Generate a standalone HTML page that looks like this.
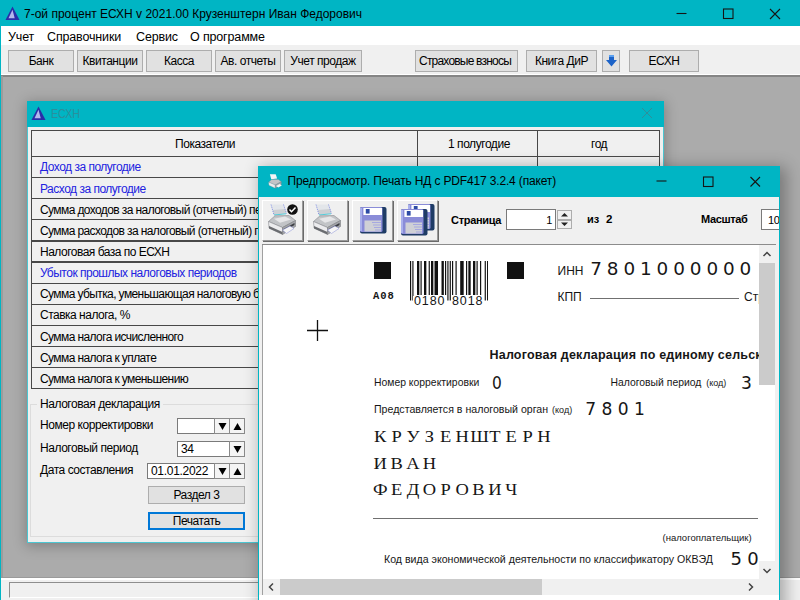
<!DOCTYPE html>
<html lang="ru">
<head>
<meta charset="utf-8">
<title>7-ой процент ЕСХН</title>
<style>
*{box-sizing:border-box;margin:0;padding:0}
html,body{width:800px;height:600px;overflow:hidden;background:#ababab;font-family:"Liberation Sans",sans-serif;font-size:12px;color:#000}
.abs{position:absolute}
#main{position:relative;width:800px;height:600px;overflow:hidden;background:#ababab}
.teal{background:#00b5c4}
.w{white-space:nowrap}
.ui{font-size:12px;letter-spacing:-0.45px}
.btn{position:absolute;border:1px solid #adadad;background:#e1e1e1;text-align:center;font-size:12px;letter-spacing:-0.45px;white-space:nowrap}
.tb{top:50px;height:21.500px;line-height:21px}
.hl{left:31px;width:629px;height:1.300px;background:#484848}
.vl{top:130px;width:1.300px;height:259px;background:#484848}
.rt{left:40px;font-size:12px;letter-spacing:-0.5px;line-height:14px}
.blue{color:#2222e0}
.inp{position:absolute;background:#fff;border:1px solid #7a7a7a;font-size:12px;letter-spacing:-0.3px;line-height:14px;padding:0 0 0 3px}
.sp{position:absolute;width:16px;height:16px;border:1px solid #8a8a8a;background:#f4f4f4}
.sp svg{position:absolute;left:3px;top:3px}
.pb{position:absolute;top:200px;width:41px;height:41px;border:1px solid;border-color:#fff #9a9a9a #9a9a9a #fff;background:#f0f0f0;box-shadow:1px 1px 0 #6a6a6a}
.doc{color:#161616}
.mono{font-family:"Liberation Mono","DejaVu Sans Mono",monospace}
.dj{font-family:"DejaVu Sans","Liberation Sans",sans-serif}
.b{font-weight:bold}
.nm{font-family:"Liberation Serif",serif;font-size:16.500px;transform:scaleX(1.12);transform-origin:0 0}
.nm i{font-style:normal;display:inline-block;width:14.640px;text-align:center}
</style>
</head>
<body>
<div id="main">
<!-- ================= main window ================= -->
<div class="abs teal" style="left:0;top:0;width:800px;height:600px"></div>
<div class="abs" style="left:1px;top:26px;width:799px;height:22px;background:#fff"></div>
<div class="abs" style="left:1px;top:45.300px;width:799px;height:30px;background:#f0f0f0"></div>
<div class="abs" style="left:1px;top:73.500px;width:799px;height:2px;background:#fff"></div>
<div class="abs" style="left:1px;top:75px;width:799px;height:505px;background:#ababab"></div>
<div class="abs" style="left:1px;top:75px;width:799px;height:1.700px;background:#858585"></div>
<div class="abs" style="left:1px;top:76px;width:1.500px;height:504px;background:#9c9c9c"></div>
<div class="abs" style="left:1px;top:577px;width:799px;height:1px;background:#9a9a9a"></div>
<div class="abs" style="left:1px;top:578px;width:799px;height:22px;background:#fff"></div>
<div class="abs" style="left:1px;top:579.500px;width:799px;height:21px;background:#f0f0f0"></div>
<div class="abs" style="left:9px;top:582px;width:252px;height:15.500px;border:1px solid #8e8e8e;border-right:none;border-bottom:1.500px solid #fff"></div>

<svg class="abs" style="left:4.500px;top:5.500px" width="15" height="14.500" viewBox="0 0 17 17" preserveAspectRatio="none"><polygon points="8.500,0.500 16.500,16.500 0.500,16.500" fill="#2a2ea8"/><polygon points="8.500,4.500 11,14.500 4,14.500" fill="#b4b7ec"/></svg>
<span class="abs w" style="left:24px;top:7px;font-size:12px;letter-spacing:0">7-ой процент ЕСХН v 2021.00 Крузенштерн Иван Федорович</span>
<svg class="abs" style="left:660px;top:0" width="140" height="26" viewBox="0 0 140 26" fill="none" stroke="#151515" stroke-width="1.100"><path d="M16.500 13.500h10"/><rect x="63.500" y="9" width="9.500" height="9.500"/><path d="M110 9l10 10M120 9l-10 10"/></svg>

<span class="abs w" style="left:8px;top:29.500px;font-size:12.500px;letter-spacing:-0.15px">Учет</span>
<span class="abs w" style="left:47px;top:29.500px;font-size:12.500px;letter-spacing:-0.15px">Справочники</span>
<span class="abs w" style="left:136px;top:29.500px;font-size:12.500px;letter-spacing:-0.15px">Сервис</span>
<span class="abs w" style="left:190px;top:29.500px;font-size:12.500px;letter-spacing:-0.15px">О программе</span>

<div class="btn tb" style="left:8px;width:66px">Банк</div>
<div class="btn tb" style="left:77px;width:66px">Квитанции</div>
<div class="btn tb" style="left:146px;width:66px">Касса</div>
<div class="btn tb" style="left:215px;width:66px">Ав. отчеты</div>
<div class="btn tb" style="left:284px;width:78px">Учет продаж</div>
<div class="btn tb" style="left:415px;width:103px;letter-spacing:-0.8px;padding-right:3px">Страховые взносы</div>
<div class="btn tb" style="left:526px;width:71px">Книга ДиР</div>
<div class="btn tb" style="left:602px;width:18px"><svg width="11" height="12" viewBox="0 0 11 12" style="position:absolute;left:3px;top:4px"><path d="M3 0h5v5h3l-5.500 6.500L0 5h3z" fill="#1c63c8"/><path d="M3 0h5v2h-5z" fill="#5aa0f0"/></svg></div>
<div class="btn tb" style="left:629px;width:70px">ЕСХН</div>

<!-- ================= ECXH child window ================= -->
<div class="abs" style="left:27px;top:101px;width:637px;height:442px;background:#f0f0f0;border:1px solid #4cc6d2;box-shadow:0 2px 12px 1px rgba(0,0,0,.25)"></div>
<div class="abs teal" style="left:27px;top:101px;width:637px;height:26px"></div>
<svg class="abs" style="left:31px;top:106px" width="15" height="14.500" viewBox="0 0 17 17" preserveAspectRatio="none"><polygon points="8.500,0.500 16.500,16.500 0.500,16.500" fill="#2a2ea8"/><polygon points="8.500,4.500 11,14.500 4,14.500" fill="#b4b7ec"/></svg>
<span class="abs w" style="left:51px;top:107px;font-size:12px;color:#2a8f9c;transform:scaleX(0.89);transform-origin:0 0">ЕСХН</span>
<svg class="abs" style="left:640px;top:106px" width="14" height="14" viewBox="0 0 14 14" stroke="#2f8e9a" stroke-width="1" fill="none"><path d="M2 2l10 10M12 2L2 12"/></svg>

<div class="abs hl" style="top:130px"></div>
<div class="abs hl" style="top:388px"></div>
<div class="abs vl" style="left:30.500px"></div>
<div class="abs vl" style="left:417px"></div>
<div class="abs vl" style="left:537px"></div>
<div class="abs vl" style="left:659px"></div>
<span class="abs w ui" style="left:175px;top:137px;line-height:14px">Показатели</span>
<span class="abs w ui" style="left:448px;top:137px;line-height:14px">1 полугодие</span>
<span class="abs w ui" style="left:591px;top:137px;line-height:14px">год</span>
<div class="abs hl" style="top:155.7px"></div><span class="abs w rt blue" style="top:160.3px">Доход за полугодие</span>
<div class="abs hl" style="top:176.8px"></div><span class="abs w rt blue" style="top:181.5px">Расход за полугодие</span>
<div class="abs hl" style="top:198.0px"></div><span class="abs w rt" style="top:202.6px;letter-spacing:-0.6px">Сумма доходов за налоговый (отчетный) период</span>
<div class="abs hl" style="top:219.1px"></div><span class="abs w rt" style="top:223.8px;letter-spacing:-0.6px">Сумма расходов за налоговый (отчетный) период</span>
<div class="abs hl" style="top:240.3px"></div><span class="abs w rt" style="top:244.9px">Налоговая база по ЕСХН</span>
<div class="abs hl" style="top:261.4px"></div><span class="abs w rt blue" style="top:266.1px">Убыток прошлых налоговых периодов</span>
<div class="abs hl" style="top:282.6px"></div><span class="abs w rt" style="top:287.2px;letter-spacing:-0.6px">Сумма убытка, уменьшающая налоговую базу</span>
<div class="abs hl" style="top:303.7px"></div><span class="abs w rt" style="top:308.3px">Ставка налога, %</span>
<div class="abs hl" style="top:324.9px"></div><span class="abs w rt" style="top:329.5px;letter-spacing:-0.6px">Сумма налога исчисленного</span>
<div class="abs hl" style="top:346.1px"></div><span class="abs w rt" style="top:350.7px;letter-spacing:-0.6px">Сумма налога к уплате</span>
<div class="abs hl" style="top:367.2px"></div><span class="abs w rt" style="top:371.8px;letter-spacing:-0.6px">Сумма налога к уменьшению</span>

<div class="abs" style="left:30px;top:404px;width:232px;height:133px;border:1px solid #dcdcdc"></div>
<span class="abs w ui" style="left:37px;top:397px;background:#f0f0f0;padding:0 3px;line-height:14px">Налоговая декларация</span>
<span class="abs w ui" style="left:40px;top:418px;line-height:14px">Номер корректировки</span>
<span class="abs w ui" style="left:40px;top:441px;line-height:14px">Налоговый период</span>
<span class="abs w ui" style="left:40px;top:463px;line-height:14px">Дата составления</span>
<div class="inp" style="left:177px;top:418px;width:38px;height:16px"></div>
<div class="sp" style="left:214px;top:418px"><svg width="9" height="9" viewBox="0 0 9 9"><path d="M0.500 1h8l-4 7z"/></svg></div>
<div class="sp" style="left:229px;top:418px"><svg width="9" height="9" viewBox="0 0 9 9"><path d="M0.500 8h8l-4-7z"/></svg></div>
<div class="inp" style="left:177px;top:441px;width:53px;height:16px">34</div>
<div class="sp" style="left:229px;top:441px"><svg width="9" height="9" viewBox="0 0 9 9"><path d="M0.500 1h8l-4 7z"/></svg></div>
<div class="inp" style="left:147px;top:463px;width:68px;height:16px">01.01.2022</div>
<div class="sp" style="left:214px;top:463px"><svg width="9" height="9" viewBox="0 0 9 9"><path d="M0.500 1h8l-4 7z"/></svg></div>
<div class="sp" style="left:229px;top:463px"><svg width="9" height="9" viewBox="0 0 9 9"><path d="M0.500 8h8l-4-7z"/></svg></div>
<div class="btn" style="left:148px;top:486px;width:97px;height:18px;line-height:16px">Раздел 3</div>
<div class="btn" style="left:148px;top:512px;width:97px;height:18px;line-height:14px;border:2px solid #0078d7">Печатать</div>

<!-- ================= Preview window ================= -->
<div class="abs" style="left:257.500px;top:166px;width:522.500px;height:450px;background:#f0f0f0;border:1.5px solid #00b5c4;box-shadow:4px 3px 15px 2px rgba(0,0,0,.3)"></div>
<div class="abs teal" style="left:257.500px;top:166px;width:522.500px;height:30.500px"></div>
<span class="abs w" style="left:287.5px;top:174px;font-size:12px;letter-spacing:-0.16px">Предпросмотр. Печать НД с PDF417 3.2.4 (пакет)</span>
<svg class="abs" style="left:640px;top:166px" width="140" height="30" viewBox="0 0 140 30" fill="none" stroke="#151515" stroke-width="1.100"><path d="M16.500 15h10"/><rect x="63.500" y="11" width="9.500" height="9.500"/><path d="M110.500 11l9.500 9.500M120 11l-9.500 9.500"/></svg>
<svg class="abs" style="left:267.500px;top:172.500px" width="14.500" height="16.500" viewBox="4 2 31 33">
<polygon points="8,3.500 20.500,3.500 23.500,12.500 11,14" fill="#f4f4f6"/>
<polygon points="5.500,20.500 12,14.800 26,14.500 32.500,19.500 19.500,26.500" fill="#c2c4c7" stroke="#8a8c90" stroke-width=".6"/>
<polygon points="5.500,20.500 19.500,26.500 19.500,33.500 6,27" fill="#ececee" stroke="#8a8c90" stroke-width=".6"/>
<polygon points="19.500,26.500 32.500,19.500 32.500,25.500 19.500,33.500" fill="#a4a6aa" stroke="#7a7c80" stroke-width=".6"/>
<polygon points="21.500,28.500 29,24.500 33.500,27.500 26,32" fill="#f6f6f6"/>
</svg>

<div class="pb" style="left:262px"><svg style="position:absolute;left:0;top:0" width="40" height="40" viewBox="0 0 40 40">
<defs><linearGradient id="pg1" x1="0" y1="0" x2="0" y2="1"><stop offset="0" stop-color="#f4f4f4"/><stop offset="1" stop-color="#c4c6c8"/></linearGradient></defs>
<polygon points="8,3.500 20.500,3.500 23.500,12.500 11,14" fill="#e3e6ea"/>
<polygon points="9.800,9 22,8 23.500,12.500 11,14" fill="#cdd0d4"/>
<path d="M8,3.500L11,14M20.500,3.500L23.500,12.500" stroke="#7080e0" stroke-width=".8" stroke-dasharray="1.200 1" fill="none"/>
<path d="M11,14L23,12.800" stroke="#40c8d8" stroke-width=".9"/>
<polygon points="5.500,20.500 12,14.800 26,14.500 32.500,19.500 19.500,26.500" fill="#c2c4c7" stroke="#8a8c90" stroke-width=".6"/>
<polygon points="11,17.800 22,15.500 28,18.500 17,21.800" fill="#e6e6e8"/>
<polygon points="5.500,20.500 19.500,26.500 19.500,33.500 6,27" fill="#ececee" stroke="#8a8c90" stroke-width=".6"/>
<polygon points="6,25 19.500,31 19.500,33.500 6,27.500" fill="#6a6c70"/>
<polygon points="19.500,26.500 32.500,19.500 32.500,25.500 19.500,33.500" fill="#a4a6aa" stroke="#7a7c80" stroke-width=".6"/>
<polygon points="20.500,28 31.500,22 31.500,24 20.500,30.500" fill="#3c3e44"/>
<polygon points="19.500,29 27,25 31,27.500 23.500,32.500" fill="#f6f6f6" stroke="#8890d8" stroke-width=".5"/>
</svg><svg style="position:absolute;left:24px;top:2.500px" width="11" height="11" viewBox="0 0 11 11"><circle cx="5.500" cy="5.500" r="5.300" fill="#111"/><path d="M2.500 5.500l2 2.200 4-4.200" stroke="#fff" stroke-width="1.500" fill="none"/></svg></div>
<div class="pb" style="left:307px"><svg style="position:absolute;left:0;top:0" width="40" height="40" viewBox="0 0 40 40">
<defs><linearGradient id="pg2" x1="0" y1="0" x2="0" y2="1"><stop offset="0" stop-color="#f4f4f4"/><stop offset="1" stop-color="#c4c6c8"/></linearGradient></defs>
<polygon points="8,3.500 20.500,3.500 23.500,12.500 11,14" fill="#e3e6ea"/>
<polygon points="9.800,9 22,8 23.500,12.500 11,14" fill="#cdd0d4"/>
<path d="M8,3.500L11,14M20.500,3.500L23.500,12.500" stroke="#7080e0" stroke-width=".8" stroke-dasharray="1.200 1" fill="none"/>
<path d="M11,14L23,12.800" stroke="#40c8d8" stroke-width=".9"/>
<polygon points="5.500,20.500 12,14.800 26,14.500 32.500,19.500 19.500,26.500" fill="#c2c4c7" stroke="#8a8c90" stroke-width=".6"/>
<polygon points="11,17.800 22,15.500 28,18.500 17,21.800" fill="#e6e6e8"/>
<polygon points="5.500,20.500 19.500,26.500 19.500,33.500 6,27" fill="#ececee" stroke="#8a8c90" stroke-width=".6"/>
<polygon points="6,25 19.500,31 19.500,33.500 6,27.500" fill="#6a6c70"/>
<polygon points="19.500,26.500 32.500,19.500 32.500,25.500 19.500,33.500" fill="#a4a6aa" stroke="#7a7c80" stroke-width=".6"/>
<polygon points="20.500,28 31.500,22 31.500,24 20.500,30.500" fill="#3c3e44"/>
<polygon points="19.500,29 27,25 31,27.500 23.500,32.500" fill="#f6f6f6" stroke="#8890d8" stroke-width=".5"/>
</svg></div>
<div class="pb" style="left:352px"><svg style="position:absolute;left:6.5px;top:5.5px" width="27" height="27" viewBox="0 0 27 27">
<rect x="0" y="0" width="26.500" height="26.500" rx="2" fill="#1f3c66"/>
<rect x="0" y="0" width="22.500" height="25" rx="1.500" fill="#8a8cd8"/>
<rect x="0" y="1" width="2" height="23" fill="#a9b0ec"/>
<rect x="3.400" y="1" width="18.600" height="7" fill="#fff"/>
<rect x="5.800" y="2" width="3.800" height="4.600" fill="#2c4aa4"/>
<rect x="4.500" y="13.500" width="16.500" height="11" fill="#cfd0d6"/>
<path d="M12 15.500h9M13 18h8M14 20.500h7M15 23h6" stroke="#a6a8e0" stroke-width="1.200"/>
</svg></div>
<div class="pb" style="left:397px"><svg style="position:absolute;left:10px;top:2.5px" width="27" height="27" viewBox="0 0 27 27">
<rect x="0" y="0" width="26.500" height="26.500" rx="2" fill="#1f3c66"/>
<rect x="0" y="0" width="22.500" height="25" rx="1.500" fill="#8a8cd8"/>
<rect x="0" y="1" width="2" height="23" fill="#a9b0ec"/>
<rect x="3.400" y="1" width="18.600" height="7" fill="#fff"/>
<rect x="5.800" y="2" width="3.800" height="4.600" fill="#2c4aa4"/>
<rect x="4.500" y="13.500" width="16.500" height="11" fill="#cfd0d6"/>
<path d="M12 15.500h9M13 18h8M14 20.500h7M15 23h6" stroke="#a6a8e0" stroke-width="1.200"/>
</svg><svg style="position:absolute;left:3px;top:8px" width="27" height="27" viewBox="0 0 27 27">
<rect x="0" y="0" width="26.500" height="26.500" rx="2" fill="#1f3c66"/>
<rect x="0" y="0" width="22.500" height="25" rx="1.500" fill="#8a8cd8"/>
<rect x="0" y="1" width="2" height="23" fill="#a9b0ec"/>
<rect x="3.400" y="1" width="18.600" height="7" fill="#fff"/>
<rect x="5.800" y="2" width="3.800" height="4.600" fill="#2c4aa4"/>
<rect x="4.500" y="13.500" width="16.500" height="11" fill="#cfd0d6"/>
<path d="M12 15.500h9M13 18h8M14 20.500h7M15 23h6" stroke="#a6a8e0" stroke-width="1.200"/>
</svg></div>

<span class="abs w b" style="left:451px;top:213.700px;font-size:11px;letter-spacing:-0.3px">Страница</span>
<div class="inp" style="left:506px;top:209px;width:50px;height:21px;text-align:right;padding:3px 3px 0 0;font-size:11px">1</div>
<div class="abs" style="left:557px;top:210px;width:15px;height:9.500px;border:1px solid #adadad;background:#f0f0f0"></div>
<div class="abs" style="left:557px;top:219.500px;width:15px;height:9.500px;border:1px solid #adadad;background:#f0f0f0"></div>
<svg class="abs" style="left:561px;top:212px" width="7" height="15" viewBox="0 0 7 15"><path d="M0 4.500h7l-3.500-3.500zM0 10.500h7l-3.500 3.500z" fill="#222"/></svg>
<span class="abs w b" style="left:587px;top:213px;font-size:11px">из</span>
<span class="abs w b" style="left:606px;top:213px;font-size:11.500px">2</span>
<span class="abs w b" style="left:701px;top:213px;font-size:11px;letter-spacing:-0.35px">Масштаб</span>
<div class="inp" style="left:761px;top:209px;width:18px;height:21px;border-right:none;padding:3px 0 0 6px;font-size:11px;overflow:hidden">100</div>

<!-- page -->
<div class="abs" style="left:262px;top:244px;width:514px;height:1px;background:#8c8c8c"></div>
<div class="abs doc" style="left:262px;top:245px;width:497px;height:334.5px;background:#fff;overflow:hidden;border-left:1px solid #a0a0a0">
<div class="abs" style="left:-263px;top:-245px;width:800px;height:600px">
  <div class="abs" style="left:373.500px;top:261.500px;width:17.500px;height:17px;background:#111"></div>
  <div class="abs" style="left:506.500px;top:261.500px;width:17.500px;height:17px;background:#111"></div>
  <svg class="abs" style="left:409.700px;top:261.200px" width="78.200" height="39.500" viewBox="0 0 67 39.500" preserveAspectRatio="none" fill="#111"><rect x="0" y="0" width="1" height="39.5"/><rect x="2" y="0" width="1" height="39.5"/><rect x="6" y="0" width="2" height="34"/><rect x="9" y="0" width="1" height="34"/><rect x="12" y="0" width="2" height="34"/><rect x="16" y="0" width="1" height="34"/><rect x="18" y="0" width="2" height="34"/><rect x="21" y="0" width="3" height="34"/><rect x="27" y="0" width="2" height="34"/><rect x="30" y="0" width="1" height="34"/><rect x="32" y="0" width="1" height="39.5"/><rect x="34" y="0" width="1" height="39.5"/><rect x="36" y="0" width="1" height="34"/><rect x="39" y="0" width="1" height="34"/><rect x="43" y="0" width="3" height="34"/><rect x="48" y="0" width="1" height="34"/><rect x="50" y="0" width="2" height="34"/><rect x="54" y="0" width="2" height="34"/><rect x="57" y="0" width="1" height="34"/><rect x="60" y="0" width="1" height="34"/><rect x="64" y="0" width="1" height="39.5"/><rect x="66" y="0" width="1" height="39.5"/></svg>
  <div class="abs" style="left:413px;top:295.500px;width:33px;height:11px;background:#fff"></div>
  <div class="abs" style="left:451px;top:295.500px;width:33px;height:11px;background:#fff"></div>
  <span class="abs w mono b" style="left:373px;top:289.500px;font-size:10.500px;letter-spacing:0.900px">A08</span>
  <span class="abs w" style="left:414px;top:294px;font-size:12.500px;letter-spacing:0.900px">0180</span>
  <span class="abs w" style="left:452px;top:294px;font-size:12.500px;letter-spacing:0.900px">8018</span>
  <svg class="abs" style="left:306px;top:319px" width="23" height="23" viewBox="0 0 23 23"><path d="M11.500 1v21M1 11.500h21" stroke="#111" stroke-width="1.300"/></svg>
  <span class="abs w" style="left:557.500px;top:263.800px;font-size:12px">ИНН</span>
  <span class="abs w dj" style="left:590.200px;top:258.300px;font-size:18.400px;letter-spacing:4.900px">7801000000</span>
  <span class="abs w" style="left:557.500px;top:289.800px;font-size:12px">КПП</span>
  <div class="abs" style="left:590px;top:297.500px;width:149px;height:1px;background:#707070"></div>
  <span class="abs w" style="left:744px;top:289.800px;font-size:12px">Стр.</span>
  <span class="abs w b" style="left:489.500px;top:348.300px;font-size:12.500px;letter-spacing:0.2px" id="ttl">Налоговая декларация по единому сельскохозяйственному налогу</span>
  <span class="abs w" style="left:374px;top:377px;font-size:10.400px">Номер корректировки</span>
  <span class="abs w dj" style="left:491.800px;top:372.500px;font-size:17.100px;transform:scaleX(0.9);transform-origin:0 0">0</span>
  <span class="abs w" style="left:610.500px;top:377px;font-size:10.400px">Налоговый период <span style="font-size:9px;margin-left:2px">(код)</span></span>
  <span class="abs w dj" style="left:741px;top:372.500px;font-size:17.100px">3</span>
  <span class="abs w" style="left:374px;top:403px;font-size:10.600px">Представляется в налоговый орган <span style="font-size:9px;margin-left:1px">(код)</span></span>
  <span class="abs w dj" style="left:585.300px;top:399px;font-size:17.100px;letter-spacing:5.400px">7801</span>
  <span class="abs w nm" style="left:372.300px;top:427px"><i>К</i><i>Р</i><i>У</i><i>З</i><i>Е</i><i>Н</i><i>Ш</i><i>Т</i><i>Е</i><i>Р</i><i>Н</i></span>
  <span class="abs w nm" style="left:372.300px;top:453.700px"><i>И</i><i>В</i><i>А</i><i>Н</i></span>
  <span class="abs w nm" style="left:372.300px;top:480px"><i>Ф</i><i>Е</i><i>Д</i><i>О</i><i>Р</i><i>О</i><i>В</i><i>И</i><i>Ч</i></span>
  <div class="abs" style="left:373px;top:517.500px;width:385px;height:1px;background:#707070"></div>
  <span class="abs w" style="left:662.500px;top:532px;font-size:9.500px">(налогоплательщик)</span>
  <span class="abs w" style="left:384px;top:553px;font-size:10.600px">Код вида экономической деятельности по классификатору ОКВЭД</span>
  <span class="abs w dj" style="left:730.500px;top:548px;font-size:18px;letter-spacing:5.200px">50</span>
</div>
</div>
<!-- scrollbars -->
<div class="abs" style="left:759px;top:246px;width:16px;height:333px;background:#fff"></div>
<div class="abs" style="left:759px;top:246px;width:16px;height:17px;background:#f0f0f0"></div>
<div class="abs" style="left:759px;top:263px;width:15.500px;height:122px;background:#cbcbcb"></div>
<div class="abs" style="left:759px;top:561px;width:16px;height:18px;background:#f0f0f0"></div>
<svg class="abs" style="left:762px;top:250px" width="10" height="8" viewBox="0 0 10 8" fill="none" stroke="#444" stroke-width="1.500"><path d="M1.500 6l3.500-3.500L8.500 6"/></svg>
<svg class="abs" style="left:762px;top:567px" width="10" height="8" viewBox="0 0 10 8" fill="none" stroke="#444" stroke-width="1.500"><path d="M1.500 2l3.500 3.500L8.500 2"/></svg>
<div class="abs" style="left:258.500px;top:595px;width:520px;height:6px;background:#fff"></div>
<div class="abs" style="left:263px;top:579px;width:512px;height:16px;background:#f0f0f0"></div>
<div class="abs" style="left:262px;top:579px;width:1px;height:16px;background:#a0a0a0"></div>
<div class="abs" style="left:279.700px;top:579.300px;width:262.500px;height:15.400px;background:#cbcbcb"></div>
<svg class="abs" style="left:266.500px;top:582px" width="8" height="10" viewBox="0 0 8 10" fill="none" stroke="#444" stroke-width="1.500"><path d="M6 1.500L2.500 5 6 8.500"/></svg>
<svg class="abs" style="left:746.500px;top:582px" width="8" height="10" viewBox="0 0 8 10" fill="none" stroke="#444" stroke-width="1.500"><path d="M2 1.500L5.500 5 2 8.500"/></svg>
</div>
</body>
</html>
